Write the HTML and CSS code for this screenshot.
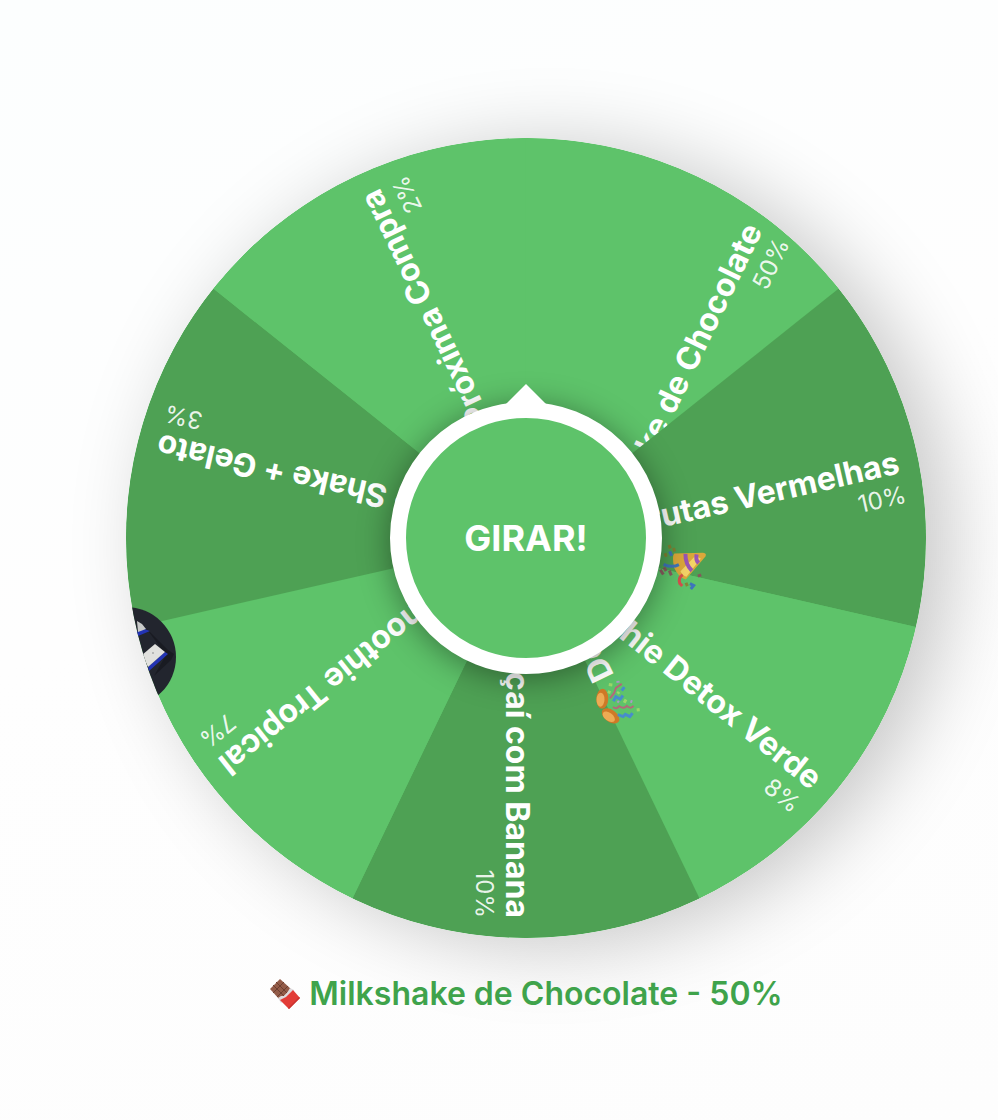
FILE: index.html
```
<!DOCTYPE html>
<html lang="pt-BR">
<head>
  <meta charset="utf-8">
  <meta name="viewport" content="width=device-width, initial-scale=1">
  <title>Roleta de prêmios</title>
  <link rel="stylesheet" href="styles.css">
</head>
<body>
  <main class="page">
    <div class="roulette">
      <svg class="wheel" viewBox="-400 -400 800 800" role="img" aria-label="Roleta de prêmios">
        <defs>
          <path id="wedge" d="M0 0L360.39 -173.55A400 400 0 0 1 360.39 173.55Z"/>
        </defs>
        <circle class="light" r="400"/>
        <g transform="rotate(-64.286)">
          <use class="light" href="#wedge"/>
          <text class="prize" x="380" y="80">Milkshake de Chocolate</text>
          <text class="chance" x="380" y="110">50%</text>
        </g>
        <g transform="rotate(-12.857)">
          <use class="dark" href="#wedge"/>
          <text class="prize" x="380" y="20">Smoothie Frutas Vermelhas</text>
          <text class="chance" x="380" y="50">10%</text>
        </g>
        <g transform="rotate(38.571)">
          <use class="light" href="#wedge"/>
          <text class="prize" x="380" y="20">Smoothie Detox Verde</text>
          <text class="chance" x="380" y="50">8%</text>
        </g>
        <g transform="rotate(90)">
          <use class="dark" href="#wedge"/>
          <text class="prize" x="380" y="20">Açaí com Banana</text>
          <text class="chance" x="380" y="50">10%</text>
        </g>
        <g transform="rotate(141.429)">
          <use class="light" href="#wedge"/>
          <text class="prize" x="380" y="20">Smoothie Tropical</text>
          <text class="chance" x="380" y="50">7%</text>
        </g>
        <g transform="rotate(192.857)">
          <use class="dark" href="#wedge"/>
          <text class="prize" x="380" y="20">Combo - Shake + Gelato</text>
          <text class="chance" x="380" y="50">3%</text>
          <g transform="translate(-160 7)">
            <path fill="#dba83a" d="M-19 15Q-20 18 -16 18L12 11Q14 8 9 -3Q2 -12 -5 -12Z"/>
            <path fill="#f4d468" d="M-15 12L-5 -9Q-1 -9 2 -5L-9 13Z"/>
            <path fill="none" stroke="#9a55b5" stroke-width="4" d="M-14 7Q-10 9 -10 15M-9 -2Q-1 3 1 13"/>
            <path fill="none" stroke="#d6504d" stroke-width="3" d="M-1 -8Q3 -12 0 -17L-3 -19"/>
            <path fill="none" stroke="#3d76bb" stroke-width="3" d="M5 1Q11 -4 20 -2M-10 -15L-14 -16L-12 -20M14 8L17 12"/>
            <path fill="none" stroke="#93465d" stroke-width="3" opacity="0.8" d="M10 -11L13 -7M18 -12L22 -8M16 -8L19 -5M-19 -4L-16 -6"/>
            <path fill="none" stroke="#8e7b2b" stroke-width="3" opacity="0.8" d="M12 13L14 16M19 6L21 9M17 15L19 18M-6 -15L-8 -18"/>
          </g>
        </g>
        <g transform="rotate(244.286)">
          <use class="light" href="#wedge"/>
          <text class="prize prize--start" x="-162" y="20">Desconto</text>
          <text class="prize" x="380" y="20">na Próxima Compra</text>
          <text class="chance" x="380" y="50">2%</text>
          <g transform="translate(-188 6)">
            <ellipse cx="-9" cy="-7" rx="6" ry="10" fill="#cf7927" transform="rotate(62 -9 -7)"/>
            <ellipse cx="-9" cy="-9" rx="4" ry="7" fill="#edab54" transform="rotate(62 -9 -9)"/>
            <ellipse cx="10" cy="-7" rx="6" ry="10" fill="#cf7927" transform="rotate(-62 10 -7)"/>
            <ellipse cx="10" cy="-9" rx="4" ry="7" fill="#edab54" transform="rotate(-62 10 -9)"/>
            <path fill="none" stroke="#b36979" stroke-width="2" d="M-2 -1Q-6 1 -4 5Q-9 8 -7 12Q-12 14 -10 18M7 0L10 6L14 10L15 17"/>
            <path fill="none" stroke="#478dcc" stroke-width="3" d="M-11 0L-15 4L-14 7L-18 10L-16 14M3 2L6 6L2 9L4 13M9 14L11 18"/>
            <path fill="none" stroke="#9cd76a" stroke-width="3" d="M12 1L14 3M20 5L18 8M-3 11L-1 14M-17 20L-14 21M8 9L9 11"/>
            <path fill="none" stroke="#a79bc3" stroke-width="2" d="M19 13L18 16M-6 17L-4 19M0 5L1 7"/>
          </g>
        </g>
        <g class="photo">
          <circle cx="-400" cy="119" r="50" fill="#22252e"/>
          <path fill="#191b22" d="M-380 90L-358 112L-352 116L-355 122L-372 138L-360 117Z"/>
          <path fill="#2334b4" d="M-390 94L-382 91L-376 93L-388 98ZM-378 129L-361 114L-358 116L-377 133Z"/>
          <path fill="#c8cac9" d="M-389 83L-384 86L-380 91L-388 94Z"/>
          <path fill="#e1e1de" d="M-384 117L-371 106L-361 114L-378 129Z"/>
          <circle cx="-373" cy="115" r="1" fill="#aaa"/>
        </g>
      </svg>
      <button class="spin" type="button">GIRAR!</button>
    </div>
    <p class="result">
      <svg class="result__icon" viewBox="0 0 32 32" aria-hidden="true">
        <path fill="#925b48" d="M11 1L22 11L11 22L1 11Z"/>
        <path fill="none" stroke="#6c3f31" stroke-width="1" d="M7 4L18 15M4 7L15 18M15 4L4 15M19 8L8 19"/>
        <path fill="#ddd9dc" d="M21 10L25 12L12 25L9 20L12 18L15 18L18 15Z"/>
        <path fill="#e23c37" d="M24 12L31 20L20 31L11 22L15 20L17 19L21 15Z"/>
        <path fill="#c93230" d="M31 20L20 31L19 30L30 19Z"/>
      </svg>
      <span>Milkshake de Chocolate - 50%</span>
    </p>
  </main>
</body>
</html>
```
FILE: styles.css
```
:root {
  --green: #5ec36a;
  --green-dark: #4ea154;
  --green-text: #3fa34b;
}

* {
  box-sizing: border-box;
}

body {
  margin: 0;
  min-height: 100vh;
  font-family: Inter, "Liberation Sans", sans-serif;
  background: linear-gradient(160deg, #fcfefe 0%, #fefefe 45%, #fdfdfd 100%);
}

.page {
  display: flex;
  flex-direction: column;
  align-items: center;
  gap: 36px;
  padding: 138px 0 72px 54px;
}

.roulette {
  display: grid;
  place-items: center;
  width: 100%;
  max-width: 800px;
}

.wheel,
.spin {
  grid-area: 1 / 1;
}

.wheel {
  display: block;
  width: 100%;
  overflow: hidden;
  border-radius: 50%;
  box-shadow: 24px 8px 80px rgba(0, 0, 0, 0.22);
}

.light {
  fill: var(--green);
}

.dark {
  fill: var(--green-dark);
}

.prize,
.chance {
  fill: #fff;
  text-anchor: end;
}

.prize {
  font-size: 32px;
  font-weight: 700;
}

.prize--start {
  text-anchor: start;
}

.chance {
  font-size: 24px;
  fill-opacity: 0.9;
}

.spin {
  position: relative;
  width: 272px;
  height: 272px;
  border: 16px solid #fff;
  border-radius: 50%;
  background: var(--green);
  box-shadow: 0 4px 32px rgba(0, 0, 0, 0.4);
  color: #fff;
  font: 700 36px/1 Inter, "Liberation Sans", sans-serif;
  cursor: pointer;
}

.spin::before {
  content: "";
  position: absolute;
  bottom: 100%;
  left: 50%;
  width: 48px;
  height: 24px;
  margin: 0 0 10px -24px;
  background: #fff;
  clip-path: polygon(50% 0, 100% 100%, 0 100%);
}

.result {
  display: flex;
  align-items: center;
  gap: 8px;
  margin: 0;
  color: var(--green-text);
  font-size: 32px;
  font-weight: 600;
  line-height: 40px;
}

.result__icon {
  width: 32px;
  height: 32px;
}
```
